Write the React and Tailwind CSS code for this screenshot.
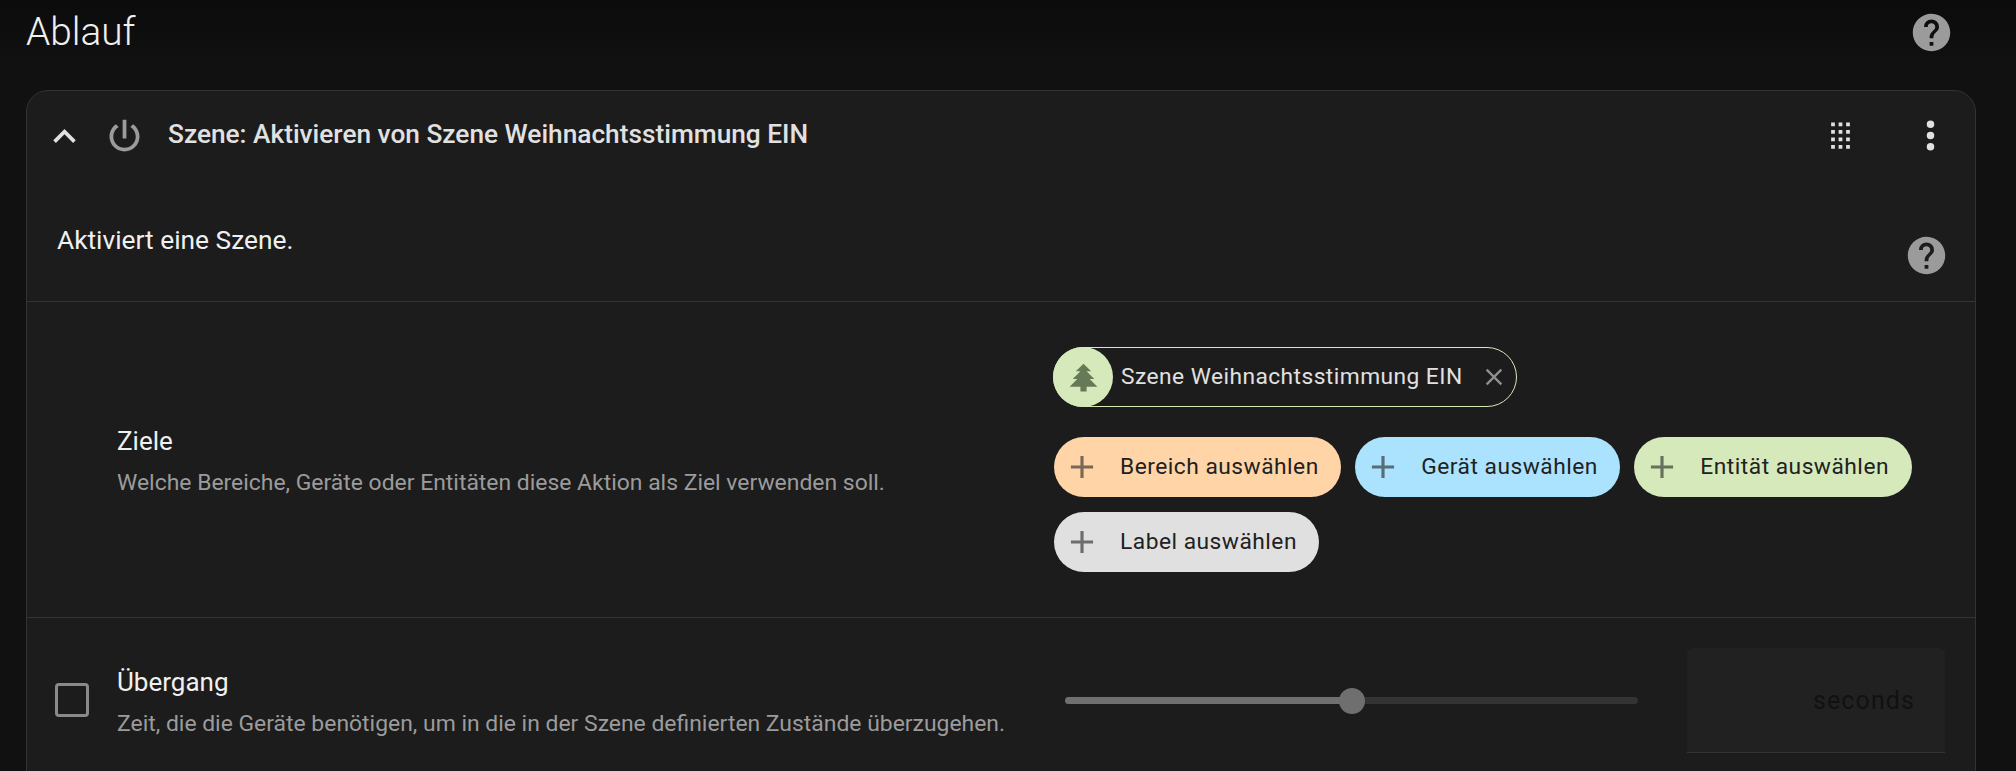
import React from 'react';

const mdi = {
  help: 'M15.07,11.25L14.17,12.17C13.45,12.89 13,13.5 13,15H11V14.5C11,13.39 11.45,12.39 12.17,11.67L13.41,10.41C13.78,10.05 14,9.55 14,9C14,7.89 13.1,7 12,7A2,2 0 0,0 10,9H8A4,4 0 0,1 12,5A4,4 0 0,1 16,9C16,9.88 15.64,10.67 15.07,11.25M13,19H11V17H13M12,2A10,10 0 0,0 2,12A10,10 0 0,0 12,22A10,10 0 0,0 22,12C22,6.47 17.5,2 12,2Z',
  chevronUp: 'M7.41,15.41L12,10.83L16.59,15.41L18,14L12,8L6,14L7.41,15.41Z',
  power: 'M16.56,5.44L15.11,6.89C16.84,7.94 18,9.83 18,12A6,6 0 0,1 12,18A6,6 0 0,1 6,12C6,9.83 7.16,7.94 8.88,6.88L7.44,5.44C5.36,6.88 4,9.28 4,12A8,8 0 0,0 12,20A8,8 0 0,0 20,12C20,9.28 18.64,6.88 16.56,5.44M13,3H11V13H13',
  drag: 'M7,19V17H9V19H7M11,19V17H13V19H11M15,19V17H17V19H15M7,15V13H9V15H7M11,15V13H13V15H11M15,15V13H17V15H15M7,11V9H9V11H7M11,11V9H13V11H11M15,11V9H17V11H15M7,7V5H9V7H7M11,7V5H13V7H11M15,7V5H17V7H15Z',
  dots: 'M12,16A2,2 0 0,1 14,18A2,2 0 0,1 12,20A2,2 0 0,1 10,18A2,2 0 0,1 12,16M12,10A2,2 0 0,1 14,12A2,2 0 0,1 12,14A2,2 0 0,1 10,12A2,2 0 0,1 12,10M12,4A2,2 0 0,1 14,6A2,2 0 0,1 12,8A2,2 0 0,1 10,6A2,2 0 0,1 12,4Z',
  pine: 'M10,21V18H3L8,13H5L10,8H7L12,3L17,8H14L19,13H16L21,18H14V21H10Z',
  plus: 'M19,13H13V19H11V13H5V11H11V5H13V11H19V13Z',
  close: 'M19,6.41L17.59,5L12,10.59L6.41,5L5,6.41L10.59,12L5,17.59L6.41,19L12,13.41L17.59,19L19,17.59L13.41,12L19,6.41Z',
};

function Icon({ d, className }) {
  return (
    <svg viewBox="0 0 24 24" fill="currentColor" className={`shrink-0 ${className}`}>
      <path d={d} />
    </svg>
  );
}

function AddButton({ label, color }) {
  return (
    <button className={`flex items-center h-[60px] rounded-full pl-[9px] pr-[22.5px] text-[#212121] ${color}`}>
      <Icon d={mdi.plus} className="w-[38px] h-[38px] opacity-60" />
      <span className="ml-[19px] text-[22.75px] tracking-[0.5px]">{label}</span>
    </button>
  );
}

export default function App() {
  return (
    <div className="h-[771px] overflow-hidden bg-[#111111] font-['Roboto',sans-serif] text-[#e1e1e1]">
      <div className="flex items-center justify-between h-[64px] mb-[26px] pl-[26px] pr-[62px] bg-gradient-to-b from-[#0b0b0b] to-[#111111]">
        <h1 className="text-[38.8px] font-light text-[#f0f0f0]">Ablauf</h1>
        <Icon d={mdi.help} className="w-[45px] h-[45px] text-[#9b9b9b]" />
      </div>

      <div className="ml-[26px] w-[1950px] rounded-t-[22px] border border-[#333333] bg-[#1c1c1c]">
        <div className="flex items-center h-[90px] pl-[15px] pr-[22px]">
          <Icon d={mdi.chevronUp} className="w-[45px] h-[45px]" />
          <Icon d={mdi.power} className="w-[45px] h-[45px] ml-[15px] text-[#9b9b9b]" />
          <span className="ml-[21px] -mt-[2px] text-[26.25px] font-medium flex-1">Szene: Aktivieren von Szene Weihnachtsstimmung EIN</span>
          <Icon d={mdi.drag} className="w-[45px] h-[45px] -mt-[1px]" />
          <Icon d={mdi.dots} className="w-[45px] h-[45px] ml-[45px] -mt-[1px]" />
        </div>

        <div className="flex items-start justify-between h-[121px] pl-[30px] pr-[26px] border-b border-[#333333]">
          <p className="mt-[40px] text-[26.3px] text-[#f0f0f0]">Aktiviert eine Szene.</p>
          <Icon d={mdi.help} className="w-[45px] h-[45px] mt-[52px] text-[#9b9b9b]" />
        </div>

        <div className="flex items-center py-[45px] pr-[30px] border-b border-[#333333]">
          <div className="flex-1 pl-[90px] mt-[3px]">
            <div className="text-[26px] text-[#f0f0f0]">Ziele</div>
            <div className="mt-[5px] text-[22.92px] text-[#9b9b9b]">Welche Bereiche, Geräte oder Entitäten diese Aktion als Ziel verwenden soll.</div>
          </div>
          <div className="w-[892px]">
            <div className="flex items-center w-fit h-[60px] rounded-full border border-[#d5e9bb]">
              <span className="flex items-center justify-center w-[60px] h-[60px] -ml-px rounded-full bg-[#d5e9bb]">
                <Icon d={mdi.pine} className="w-[37px] h-[37px] text-[#667a55]" />
              </span>
              <span className="ml-[8px] text-[22.75px] tracking-[0.45px]">Szene Weihnachtsstimmung EIN</span>
              <Icon d={mdi.close} className="w-[28px] h-[28px] ml-[17px] mr-[8px] text-[#8f8f8f]" />
            </div>
            <div className="flex flex-wrap gap-x-[14px] gap-y-[15px] mt-[30px] ml-px">
              <AddButton label="Bereich auswählen" color="bg-[#ffd5a8]" />
              <AddButton label="Gerät auswählen" color="bg-[#abe3ff]" />
              <AddButton label="Entität auswählen" color="bg-[#d5e9bb]" />
              <AddButton label="Label auswählen" color="bg-[#e0e0e0]" />
            </div>
          </div>
        </div>

        <div className="flex items-center py-[30px] pr-[30px]">
          <span className="ml-[28px] -mt-[1px] w-[34px] h-[34px] rounded-[4px] border-[3px] border-[#8a8a8a]" />
          <div className="flex-1 ml-[28px] mt-[4px]">
            <div className="text-[26px] text-[#f0f0f0]">Übergang</div>
            <div className="mt-[5px] text-[22.92px] text-[#9b9b9b]">Zeit, die die Geräte benötigen, um in die in der Szene definierten Zustände überzugehen.</div>
          </div>
          <div className="flex items-center w-[573px] h-[7px] rounded-full bg-[#333333] mr-[49px]">
            <div className="w-[287px] h-[7px] rounded-l-full bg-[#6f6f6f]" />
            <div className="w-[26px] h-[26px] -ml-[13px] rounded-full bg-[#6f6f6f]" />
          </div>
          <div className="flex items-center justify-end w-[258px] h-[105px] pr-[30px] pt-[2px] rounded-t-[6px] border-b border-[#333333] bg-[#212121] text-[25px] tracking-[1.1px] text-[#111111]">
            seconds
          </div>
        </div>
      </div>
    </div>
  );
}
